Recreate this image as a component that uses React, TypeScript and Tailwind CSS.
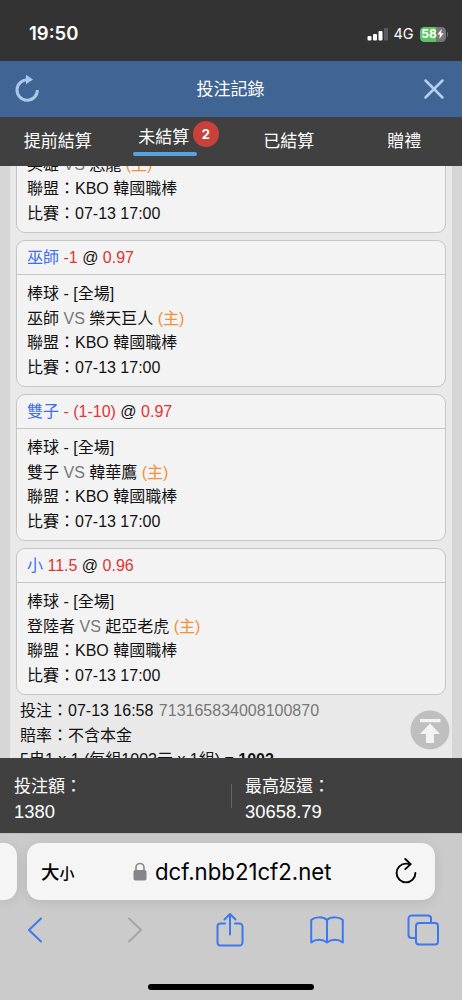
type Bet = {
  pick: string;
  line: string;
  odds: string;
  away: string;
  home: string;
};

const bets: Bet[] = [
  { pick: "英雄", line: "-1", odds: "0.95", away: "英雄", home: "恐龍" },
  { pick: "巫師", line: "-1", odds: "0.97", away: "巫師", home: "樂天巨人" },
  { pick: "雙子", line: "- (1-10)", odds: "0.97", away: "雙子", home: "韓華鷹" },
  { pick: "小", line: "11.5", odds: "0.96", away: "登陸者", home: "起亞老虎" },
];

const tabs = [
  { label: "提前結算" },
  { label: "未結算", count: 2 },
  { label: "已結算" },
  { label: "贈禮" },
];

function StatusBar() {
  return (
    <div className="flex h-[61px] shrink-0 items-center justify-between bg-[#333333] pt-[7px] pr-[14px] pl-[29px] font-['Inter','Liberation_Sans',sans-serif] text-white">
      <span className="text-[18.5px] font-semibold">19:50</span>
      <div className="flex items-center">
        <svg width="22" height="14" viewBox="0 0 22 14" fill="#fff">
          <rect x="0.5" y="9" width="4" height="4.5" rx="1" />
          <rect x="6" y="7" width="4" height="6.5" rx="1" />
          <rect x="11.5" y="4" width="4" height="9.5" rx="1" />
          <rect x="17" y="1" width="4" height="12.5" rx="1" fill="#5c5c5c" />
        </svg>
        <span className="ml-[5px] w-[26px] text-[14.5px]">4G</span>
        <div className="flex h-[15px] w-[26px] items-center justify-center rounded-[4.5px] bg-[linear-gradient(90deg,#5fc466_60%,#77777a_60%)]">
          <span className="text-[12px] leading-none font-bold">58</span>
          <svg width="7" height="10" viewBox="0 0 7 10" fill="#fff">
            <path d="M4.6 0 0.4 5.6h2.5L2.3 10 6.6 4.2H4Z" />
          </svg>
        </div>
        <span className="ml-px h-[5px] w-[1.5px] rounded-r bg-[#69696b]" />
      </div>
    </div>
  );
}

function Header() {
  return (
    <header className="flex h-[56px] shrink-0 items-center justify-between bg-[#406494] pr-[17px] pl-[14px]">
      <svg width="27" height="30" viewBox="0 0 27 30" fill="none">
        <path d="M14.5 5.9A10.2 10.2 0 1 0 23.4 16" stroke="#a9c8ea" strokeWidth="3" />
        <path d="m12 0.8 7 4.7-7 4.7Z" fill="#a9c8ea" />
      </svg>
      <h1 className="pt-px pr-[3px] text-[17px] text-white">投注記錄</h1>
      <svg width="22" height="22" viewBox="0 0 22 22" fill="none" stroke="#b4d0ef" strokeWidth="2.5" strokeLinecap="round">
        <path d="m2.5 2.5 17 17M19.5 2.5l-17 17" />
      </svg>
    </header>
  );
}

function Tabs() {
  return (
    <nav className="flex h-[49px] shrink-0 bg-[#404040] text-[17px] leading-[24px] text-white">
      {tabs.map((tab) => (
        <div key={tab.label} className="flex flex-1 justify-center">
          {tab.count ? (
            <>
              <span className="mt-[9px] ml-[5px] flex h-[30px] w-[64px] shrink-0 flex-col justify-between pr-[2px] text-center">
                {tab.label}
                <span className="h-[4px] w-[64px] shrink-0 rounded-full bg-[#54a4e4]" />
              </span>
              <span className="relative top-[4px] -ml-[4px] flex size-[26px] shrink-0 items-center justify-center rounded-full bg-[#c9413a] font-['Inter','Liberation_Sans',sans-serif] text-[13px] font-bold">
                {tab.count}
              </span>
            </>
          ) : (
            <span className="mt-[13px]">{tab.label}</span>
          )}
        </div>
      ))}
    </nav>
  );
}

function BetCard({ bet }: { bet: Bet }) {
  return (
    <article className="h-[147px] shrink-0 rounded-[9px] border border-[#c6c6c6] bg-[#f3f3f3]">
      <div className="h-[34px] border-b border-[#c6c6c6] pl-[10px] leading-[33px]">
        <span className="text-[#3d6df0]">{bet.pick}</span> <span className="text-[#e03535]">{bet.line}</span> @{" "}
        <span className="text-[#e03535]">{bet.odds}</span>
      </div>
      <div className="pt-[7px] pl-[10px] leading-[24.6px]">
        <p>棒球 - [全場]</p>
        <p>
          {bet.away} <span className="text-[#777]">VS</span> {bet.home}{" "}
          <span className="text-[#f0913c]">(主)</span>
        </p>
        <p>聯盟：KBO 韓國職棒</p>
        <p>比賽：07-13 17:00</p>
      </div>
    </article>
  );
}

function Totals() {
  return (
    <div className="flex h-[75px] shrink-0 items-center bg-[#404040] text-white">
      <div className="w-[231px] pt-[6px] pl-[14px]">
        <p className="text-[17px] leading-[25px]">投注額：</p>
        <p className="text-[18.4px] leading-[25px]">1380</p>
      </div>
      <div className="h-[24px] w-px bg-[#646464]" />
      <div className="pt-[6px] pl-[13px]">
        <p className="text-[17px] leading-[25px]">最高返還：</p>
        <p className="text-[18.4px] leading-[25px]">30658.79</p>
      </div>
    </div>
  );
}

function BrowserBar() {
  return (
    <footer className="flex h-[167px] shrink-0 flex-col border-t border-[#bdbdbd] bg-[#cbcbcb]">
      <div className="mt-[9px] flex h-[57px] gap-[10px]">
        <div className="w-[17px] rounded-r-[13px] bg-[#f5f5f5] shadow-[0_2px_12px_rgba(0,0,0,0.1)]" />
        <div className="flex w-[408px] items-center rounded-[13px] bg-[#f5f5f5] pr-[17px] pl-[14px] text-black shadow-[0_2px_12px_rgba(0,0,0,0.1)]">
          <span className="w-[91px] pt-[3px] font-medium">
            <span className="text-[18.5px]">大</span>
            <span className="text-[15px]">小</span>
          </span>
          <svg width="14" height="19" viewBox="0 0 14 19" className="ml-px">
            <path d="M3 9V5.5a4 4 0 0 1 8 0V9" fill="none" stroke="#86868a" strokeWidth="1.6" />
            <rect x="0.5" y="8" width="13" height="10.5" rx="1.8" fill="#86868a" />
          </svg>
          <span className="ml-[8px] flex-1 pt-px font-['Inter','Liberation_Sans',sans-serif] text-[22.2px] tracking-[0px]">
            dcf.nbb21cf2.net
          </span>
          <svg width="24" height="28" viewBox="0 0 24 28" fill="none" stroke="#000" strokeWidth="1.9" strokeLinecap="round" strokeLinejoin="round">
            <path d="M16 6.300C15 5.800 13.500 5.600 12 5.600A9.400 9.400 0 1 0 21.400 15" />
            <path d="m11.300 1 5.400 5.100-5.400 5" />
          </svg>
        </div>
      </div>
      <div className="mt-[10px] flex h-[40px] items-center pl-[26px]">
        <svg width="18" height="28" viewBox="0 0 18 28" fill="none" stroke="#3e78ee" strokeWidth="2" strokeLinecap="round" strokeLinejoin="round">
          <path d="M15 2.5 3 14l12 11.5" />
        </svg>
        <svg width="18" height="28" viewBox="0 0 18 28" fill="none" stroke="#a6a6a6" strokeWidth="2" strokeLinecap="round" strokeLinejoin="round" className="ml-[82px]">
          <path d="m3 2.5 12 11.5L3 25.5" />
        </svg>
        <svg width="28" height="36" viewBox="0 0 28 36" fill="none" stroke="#3e78ee" strokeWidth="2" strokeLinecap="round" strokeLinejoin="round" className="ml-[72px]">
          <path d="M9 11.5H4.5a3 3 0 0 0-3 3v16a3 3 0 0 0 3 3h19a3 3 0 0 0 3-3v-16a3 3 0 0 0-3-3H19" />
          <path d="M14 22.5V2.5M8.5 7.5 14 2l5.5 5.5" />
        </svg>
        <svg width="34" height="28" viewBox="0 0 34 28" fill="none" stroke="#3e78ee" strokeWidth="2" strokeLinejoin="round" className="ml-[66px]">
          <path d="M17 4C13 .4 5 .6 1.2 4v22.5c4.4-3.6 11.4-3.6 15.8 0 4.4-3.6 11.4-3.6 15.8 0V4C29 .6 21 .4 17 4ZM17 4v22.5" />
        </svg>
        <svg width="32" height="32" viewBox="0 0 32 32" fill="none" stroke="#3e78ee" strokeWidth="2" className="ml-[63px]">
          <path d="M8.5 24H4.5a3 3 0 0 1-3-3V4.5a3 3 0 0 1 3-3H21a3 3 0 0 1 3 3V8.5" />
          <rect x="9" y="9" width="22" height="21.5" rx="3" />
        </svg>
      </div>
      <div className="mt-[34px] h-[6px] w-[166px] self-center rounded-full bg-black" />
    </footer>
  );
}

export default function App() {
  return (
    <div className="flex h-[1000px] w-[462px] flex-col overflow-hidden font-['Liberation_Sans','Noto_Sans_CJK_TC',sans-serif]">
      <StatusBar />
      <Header />
      <Tabs />
      <main className="relative h-[592px] shrink-0 overflow-hidden bg-[#d6d6d6] px-[10px]">
        <div className="-mt-[80px] h-[672px] bg-[#e9e9e9] px-[6px] text-[16px] text-[#111]">
          <div className="flex flex-col gap-[7px]">
            {bets.map((bet) => (
              <BetCard key={bet.pick} bet={bet} />
            ))}
          </div>
          <div className="pt-[4px] pl-[4px] leading-[24.6px]">
            <p>
              投注：07-13 16:58 <span className="ml-px text-[#777]">713165834008100870</span>
            </p>
            <p>賠率：不含本金</p>
            <p>
              5串1 x 1 (每組1002元 x 1組) = <b>1002</b>
            </p>
          </div>
        </div>
        {/* back to top */}
        <button className="absolute right-[12px] bottom-[8px]">
          <svg width="40" height="40" viewBox="0 0 40 40">
            <circle cx="20" cy="20" r="19.5" fill="#bfbfbf" />
            <rect x="10" y="9" width="20.5" height="3.2" fill="#f3f3f3" />
            <path d="M20 13.5 30 24h-6v9h-8v-9h-6Z" fill="#f3f3f3" />
          </svg>
        </button>
      </main>
      <Totals />
      <BrowserBar />
    </div>
  );
}
